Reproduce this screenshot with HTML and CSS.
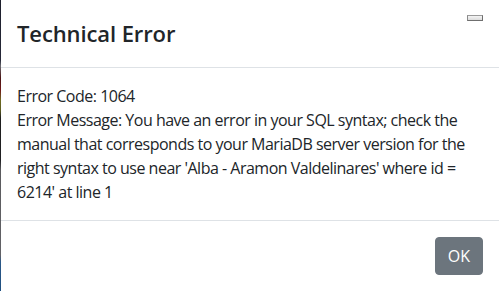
FILE: index.html
```html
<!DOCTYPE html>
<html lang="en">
<head>
<meta charset="utf-8">
<title>Technical Error</title>
<link rel="stylesheet" href="styles.css">
</head>
<body>
<div class="backdrop-strip"></div>
<div class="modal">
  <div class="modal-header">
    <h5 class="modal-title">Technical Error</h5>
    <button class="close" type="button" aria-label="Close"><span class="close-bar"></span></button>
  </div>
  <div class="modal-body">
    <div>Error Code: 1064</div>
    <div>Error Message: You have an error in your SQL syntax; check the manual that corresponds to your MariaDB server version for the right syntax to use near 'Alba - Aramon Valdelinares' where id = 6214' at line 1</div>
  </div>
  <div class="modal-footer">
    <button class="btn" type="button">OK</button>
  </div>
</div>
</body>
</html>
```

FILE: styles.css
```css
html, body {
  margin: 0;
  padding: 0;
  width: 499px;
  height: 291px;
  overflow: hidden;
  background: #fff;
}
body {
  display: flex;
  font-family: "Open Sans", "Noto Sans", sans-serif;
  color: #212529;
}
.backdrop-strip {
  width: 1px;
  flex: none;
  background: linear-gradient(to bottom,
    #1d1f2c 0px, #262838 60px, #6a6a70 66px, #4a1414 78px, #701818 90px,
    #6e6a22 100px, #5c5c20 110px, #1e1e1e 118px, #202022 160px,
    #5a5a5e 170px, #626266 255px, #2a5888 262px, #1f4f80 291px);
}
.modal {
  flex: 1;
  display: flex;
  flex-direction: column;
  background: #fff;
}
.modal-header {
  display: flex;
  justify-content: space-between;
  align-items: flex-start;
  padding: 16px 16px;
  border-bottom: 1px solid #dee2e6;
}
.modal-title {
  margin: 0;
  font-size: 22px;
  line-height: 35px;
  font-weight: 600;
  letter-spacing: -0.1px;
}
.close {
  margin: -1px 0 0 0;
  padding: 0;
  border: 0;
  background: none;
  width: 16px;
  height: 6px;
  display: flex;
}
.close-bar {
  flex: 1;
  border: 1px solid #6f6f6f;
  border-top-color: #9a9a9a;
  border-left-color: #8a8a8a;
  background: linear-gradient(#f4f4f4, #dcdcdc);
}
.modal-body {
  padding: 16px;
  font-size: 16px;
  line-height: 24px;
  letter-spacing: -0.5px;
}
.modal-footer {
  display: flex;
  justify-content: flex-end;
  padding: 12px;
  border-top: 1px solid #dee2e6;
}
.btn {
  margin: 4px;
  padding: 6px 12px;
  border: 1px solid #6c757d;
  border-radius: 4px;
  background: #6c757d;
  color: #fff;
  font-family: "Open Sans", "Noto Sans", sans-serif;
  font-size: 16px;
  line-height: 24px;
}
```
